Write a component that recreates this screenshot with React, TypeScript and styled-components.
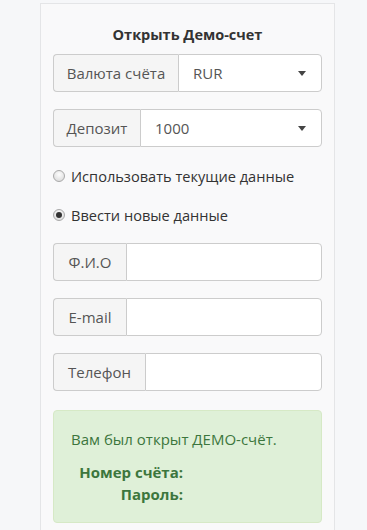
import React from 'react';
import styled, {createGlobalStyle} from "styled-components";

const GlobalStyle = createGlobalStyle`
  body {
    margin: 0;
    background: #f6f7f9;
    font-family: "Open Sans", "Liberation Sans", sans-serif;
    color: #333;
  }
`

const Panel = styled.div`
  box-sizing: border-box;
  width: 295px;
  margin: 3px 0 0 40px;
  min-height: 540px;
  padding: 20px 12px 0;
  background: #f9f9fa;
  border: 1px solid #e4e5e7;
  border-bottom: none;
`

const Title = styled.h3`
  margin: 0 0 8px;
  font-size: 14.5px;
  line-height: 22px;
  font-weight: 700;
  text-align: center;
  color: #333;
`

const InputGroup = styled.div<{ $mt?: number }>`
  display: flex;
  height: 38px;
  margin-top: ${p => p.$mt ?? 0}px;
  box-sizing: border-box;
`

const Addon = styled.span<{ $w: number }>`
  box-sizing: border-box;
  flex: 0 0 ${p => p.$w}px;
  display: flex;
  align-items: center;
  justify-content: center;
  background: #f5f5f5;
  border: 1px solid #ccc;
  border-right: none;
  border-radius: 4px 0 0 4px;
  font-size: 15px;
  color: #555;
`

const Field = styled.div`
  box-sizing: border-box;
  flex: 1;
  display: flex;
  align-items: center;
  justify-content: space-between;
  padding: 0 15px 0 14px;
  background: #fff;
  border: 1px solid #ccc;
  border-radius: 0 4px 4px 0;
  font-size: 15px;
  color: #555;
`

const Caret = styled.span`
  width: 0;
  height: 0;
  border-left: 4px solid transparent;
  border-right: 4px solid transparent;
  border-top: 5px solid #444;
`

const RadioRow = styled.label<{ $mt: number }>`
  display: flex;
  align-items: center;
  gap: 6px;
  height: 20px;
  margin-top: ${p => p.$mt}px;
  font-size: 14.6px;
  color: #333;
`

const RadioDot = styled.span<{ $checked?: boolean }>`
  box-sizing: border-box;
  width: 12px;
  height: 12px;
  border-radius: 50%;
  border: 1px solid #a9a9a9;
  background: radial-gradient(circle at 50% 35%, #fdfdfd, #d6d6d6);
  display: flex;
  align-items: center;
  justify-content: center;

  &::after {
    content: "";
    display: ${p => p.$checked ? 'block' : 'none'};
    width: 6px;
    height: 6px;
    border-radius: 50%;
    background: #333;
  }
`

const Alert = styled.div`
  box-sizing: border-box;
  margin-top: 19px;
  height: 113px;
  padding: 18px 17px 0;
  background: #dff0d8;
  border: 1px solid #d6e9c6;
  border-radius: 4px;
  color: #3c763d;
  font-size: 15px;
`

const AlertText = styled.div`
  line-height: 20px;
`

const Creds = styled.div`
  display: grid;
  grid-template-columns: 112px 1fr;
  margin-top: 12px;
  line-height: 22px;
`

const CredLabel = styled.span`
  font-weight: 700;
  text-align: right;
`

const App = () => {
    return (
        <>
            <GlobalStyle/>
            <Panel>
                <Title>Открыть Демо-счет</Title>
                <InputGroup>
                    <Addon $w={125}>Валюта счёта</Addon>
                    <Field>RUR<Caret/></Field>
                </InputGroup>
                <InputGroup $mt={17}>
                    <Addon $w={87}>Депозит</Addon>
                    <Field>1000<Caret/></Field>
                </InputGroup>
                <RadioRow $mt={19}><RadioDot/>Использовать текущие данные</RadioRow>
                <RadioRow $mt={19}><RadioDot $checked/>Ввести новые данные</RadioRow>
                <InputGroup $mt={18}>
                    <Addon $w={73}>Ф.И.О</Addon>
                    <Field/>
                </InputGroup>
                <InputGroup $mt={17}>
                    <Addon $w={73}>E-mail</Addon>
                    <Field/>
                </InputGroup>
                <InputGroup $mt={17}>
                    <Addon $w={92}>Телефон</Addon>
                    <Field/>
                </InputGroup>
                <Alert>
                    <AlertText>Вам был открыт ДЕМО-счёт.</AlertText>
                    <Creds>
                        <CredLabel>Номер счёта:</CredLabel><span/>
                        <CredLabel>Пароль:</CredLabel><span/>
                    </Creds>
                </Alert>
            </Panel>
        </>
    );
};

export default App;
